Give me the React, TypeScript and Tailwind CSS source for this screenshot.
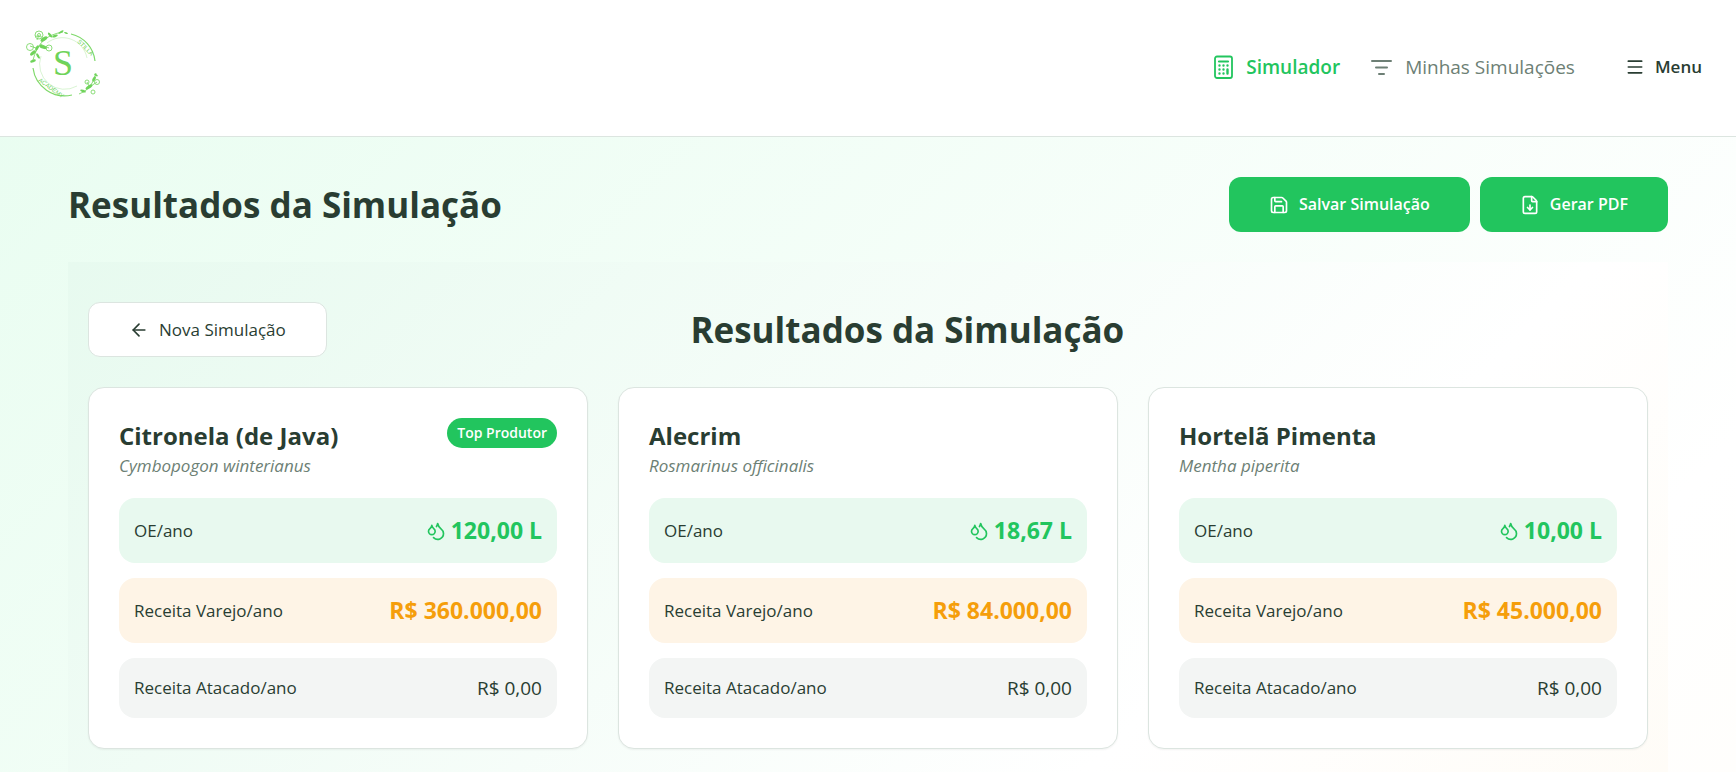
import { ArrowLeft, Droplets, FileDown, Menu, Save } from "lucide-react"

const plants = [
    { name: 'Citronela (de Java)', scientific: 'Cymbopogon winterianus', oil: '120,00 L', retail: 'R$ 360.000,00', wholesale: 'R$ 0,00', top: true },
    { name: 'Alecrim', scientific: 'Rosmarinus officinalis', oil: '18,67 L', retail: 'R$ 84.000,00', wholesale: 'R$ 0,00', top: false },
    { name: 'Hortelã Pimenta', scientific: 'Mentha piperita', oil: '10,00 L', retail: 'R$ 45.000,00', wholesale: 'R$ 0,00', top: false },
]

function Logo() {
  return (
    <svg viewBox="0 2 110 110" className="size-[110px]" fill="none" stroke="#7fd96b" role="img" aria-label="Stilla Academy">
        {/* rings */}
        <path d="M61 24 A31 31 0 0 1 85 51" strokeWidth="1.2" />
        <path d="M23 58 A32 32 0 0 0 62 85" strokeWidth="1.2" />
        <path d="M37 33 A25 25 0 0 1 77 48" strokeWidth="0.5" opacity="0.6" />
        <path d="M31 46 A25 25 0 0 0 67 76" strokeWidth="0.5" opacity="0.6" />
        {/* top left branch */}
        <g strokeWidth="0.9">
            <path d="M53 22 Q40 24 33 31 Q26 38 23 50" />
            <circle cx="29" cy="25" r="4" />
            <circle cx="39" cy="38" r="3" />
            <circle cx="20" cy="37" r="3.5" />
            <circle cx="29" cy="25" r="1.5" />
            <path d="M27 30 L29 25 M30 34 L39 38 M26 38 L20 36 M25 26 L32 27" />
        </g>
        <g fill="#6fd35a" stroke="none">
            <ellipse cx="34" cy="29" rx="4" ry="1.8" transform="rotate(-35 34 29)" />
            <ellipse cx="40" cy="25" rx="3" ry="1.2" transform="rotate(50 40 25)" />
            <ellipse cx="45" cy="26" rx="3" ry="1.2" transform="rotate(-20 45 26)" />
            <ellipse cx="51" cy="22" rx="3" ry="1" transform="rotate(-30 51 22)" />
            <ellipse cx="56" cy="23" rx="2" ry="0.8" transform="rotate(20 56 23)" />
            <ellipse cx="33" cy="37" rx="4" ry="1.6" transform="rotate(20 33 37)" />
            <ellipse cx="27" cy="38" rx="3" ry="1.4" transform="rotate(-60 27 38)" />
            <ellipse cx="23" cy="43" rx="3.5" ry="1.6" transform="rotate(-40 23 43)" />
            <ellipse cx="28" cy="46" rx="3" ry="1.2" transform="rotate(60 28 46)" />
            <ellipse cx="23" cy="51" rx="3" ry="1.4" transform="rotate(-20 23 51)" />
        </g>
        {/* bottom right branch */}
        <g strokeWidth="0.9">
            <path d="M69 84 Q82 80 86 63" />
            <circle cx="87" cy="72" r="2.5" />
            <circle cx="77" cy="72" r="2" />
            <circle cx="83" cy="82" r="2" />
            <path d="M81 76 L87 72 M80 78 L77 72" />
        </g>
        <g fill="#6fd35a" stroke="none">
            <ellipse cx="79" cy="77" rx="4" ry="1.6" transform="rotate(-35 79 77)" />
            <ellipse cx="73" cy="81" rx="3" ry="1.2" transform="rotate(20 73 81)" />
            <ellipse cx="84" cy="69" rx="3" ry="1.4" transform="rotate(-60 84 69)" />
            <ellipse cx="86" cy="65" rx="2" ry="1" transform="rotate(30 86 65)" />
        </g>
        <text x="53" y="65" textAnchor="middle" fill="#6fd35a" stroke="none" fontSize="36" fontFamily="Liberation Serif, serif">S</text>
        <g fill="#6fd35a" stroke="none" fontSize="6" fontFamily="Liberation Sans, sans-serif">
            <text x="67" y="32" transform="rotate(45 67 32)">STILLA</text>
            <text x="28" y="71" transform="rotate(36 28 71)">ACADEMY</text>
        </g>
    </svg>
  )
}

function CalculatorIcon() {
  return (
    <svg viewBox="0 0 25 25" className="size-[25px]" fill="none" stroke="currentColor" strokeWidth="1.8" strokeLinecap="round" aria-hidden="true">
        <rect x="4" y="1.5" width="17" height="21.5" rx="2" />
        <path d="M8 6.500h9" strokeWidth="2.2" />
        <path d="M8.500 10.500h0M12.500 10.500h0M16.500 10.500h0M8.500 14.500h0M12.500 14.500h0M16.500 14.500v4M8.500 18.500h0M12.500 18.500h0" strokeWidth="2.4" />
    </svg>
  )
}

function FilterIcon() {
  return (
    <svg viewBox="0 0 25 25" className="size-[25px]" fill="none" stroke="currentColor" strokeWidth="2" strokeLinecap="round" aria-hidden="true">
        <path d="M2 6h19M6 12.500h11M9 19h5" />
    </svg>
  )
}

function PlantCard({ plant }: { plant: (typeof plants)[number] }) {
  return (
    <article className="rounded-2xl border border-[#dce5e0] bg-white p-[30px] shadow-xs">
        <div className="flex items-start justify-between mb-5">
            <div>
                <h3 className="text-[24px] leading-[35px] font-bold">{plant.name}</h3>
                <p className="text-[17px] leading-[25px] italic text-[#6d7f75]">{plant.scientific}</p>
            </div>
            {plant.top && (
                <span className="rounded-full bg-[#22c55e] px-[10px] text-[14px] leading-[30px] font-semibold text-white">Top Produtor</span>
            )}
        </div>
        <dl className="flex flex-col gap-[15px] text-[17px] font-medium">
            <div className="flex items-center justify-between rounded-2xl bg-[#e8f9ef] p-[15px]">
                <dt>OE/ano</dt>
                <dd className="flex items-center gap-[5px] text-[23px] leading-[35px] font-bold text-[#22c55e]">
                    <Droplets className="size-5" />
                    {plant.oil}
                </dd>
            </div>
            <div className="flex items-center justify-between rounded-2xl bg-[#fef4e6] p-[15px]">
                <dt>Receita Varejo/ano</dt>
                <dd className="text-[23px] leading-[35px] font-bold text-[#f59e0b]">{plant.retail}</dd>
            </div>
            <div className="flex items-center justify-between rounded-2xl bg-[#f3f5f4] p-[15px]">
                <dt>Receita Atacado/ano</dt>
                <dd className="text-[19px] leading-[30px]">{plant.wholesale}</dd>
            </div>
        </dl>
    </article>
  )
}

function App() {
  return (
    <div className="min-h-screen bg-[linear-gradient(135deg,#e8fdf0_0px,#ffffff_1540px,#fff8ec_3080px)] font-['Open_Sans','Noto_Sans',sans-serif] text-[#293d32]">
        <header className="flex items-center justify-between border-b border-[#dce5e0] bg-white px-[10px] pt-3 pb-3.5">
            <a href="#"><Logo /></a>
            <nav className="flex items-center pr-6 text-[19px]">
                <a href="#" className="flex items-center gap-[10px] mr-[30px] font-semibold text-[#22c55e]">
                    <CalculatorIcon />
                    Simulador
                </a>
                <a href="#" className="flex items-center gap-[10px] mr-[50px] text-[#6d7f75]">
                    <FilterIcon />
                    Minhas Simulações
                </a>
                <button className="flex items-center gap-[10px] text-[17px] font-semibold">
                    <Menu className="size-5" />
                    Menu
                </button>
            </nav>
        </header>

        <main className="mx-auto max-w-[1600px] pt-10">
            <div className="flex items-center justify-between mb-[30px]">
                <h1 className="text-[35px] leading-[55px] font-bold">Resultados da Simulação</h1>
                <div className="flex gap-[10px] text-[16px] leading-[25px] font-semibold text-white">
                    <button className="flex items-center gap-[10px] rounded-xl bg-[#22c55e] px-10 py-[15px]">
                        <Save className="size-5" />
                        Salvar Simulação
                    </button>
                    <button className="flex items-center gap-[10px] rounded-xl bg-[#22c55e] px-10 py-[15px]">
                        <FileDown className="size-5" />
                        Gerar PDF
                    </button>
                </div>
            </div>

            <section className="bg-[linear-gradient(135deg,#e7faef_0px,#ffffff_1080px,#fef7ea_2160px)] px-5 py-10">
                <div className="flex items-center justify-between mb-[30px]">
                    <button className="flex items-center gap-[10px] rounded-xl border border-[#dce5e0] bg-white px-10 py-[14px] text-[17px] leading-[25px] font-medium">
                        <ArrowLeft className="size-5" />
                        Nova Simulação
                    </button>
                    <h2 className="text-[35px] leading-[55px] font-bold">Resultados da Simulação</h2>
                    <div className="w-40" />
                </div>
                <div className="grid grid-cols-3 gap-[30px]">
                    {plants.map((plant) => (
                        <PlantCard key={plant.name} plant={plant} />
                    ))}
                </div>
            </section>
        </main>
    </div>
  )
}

export default App
